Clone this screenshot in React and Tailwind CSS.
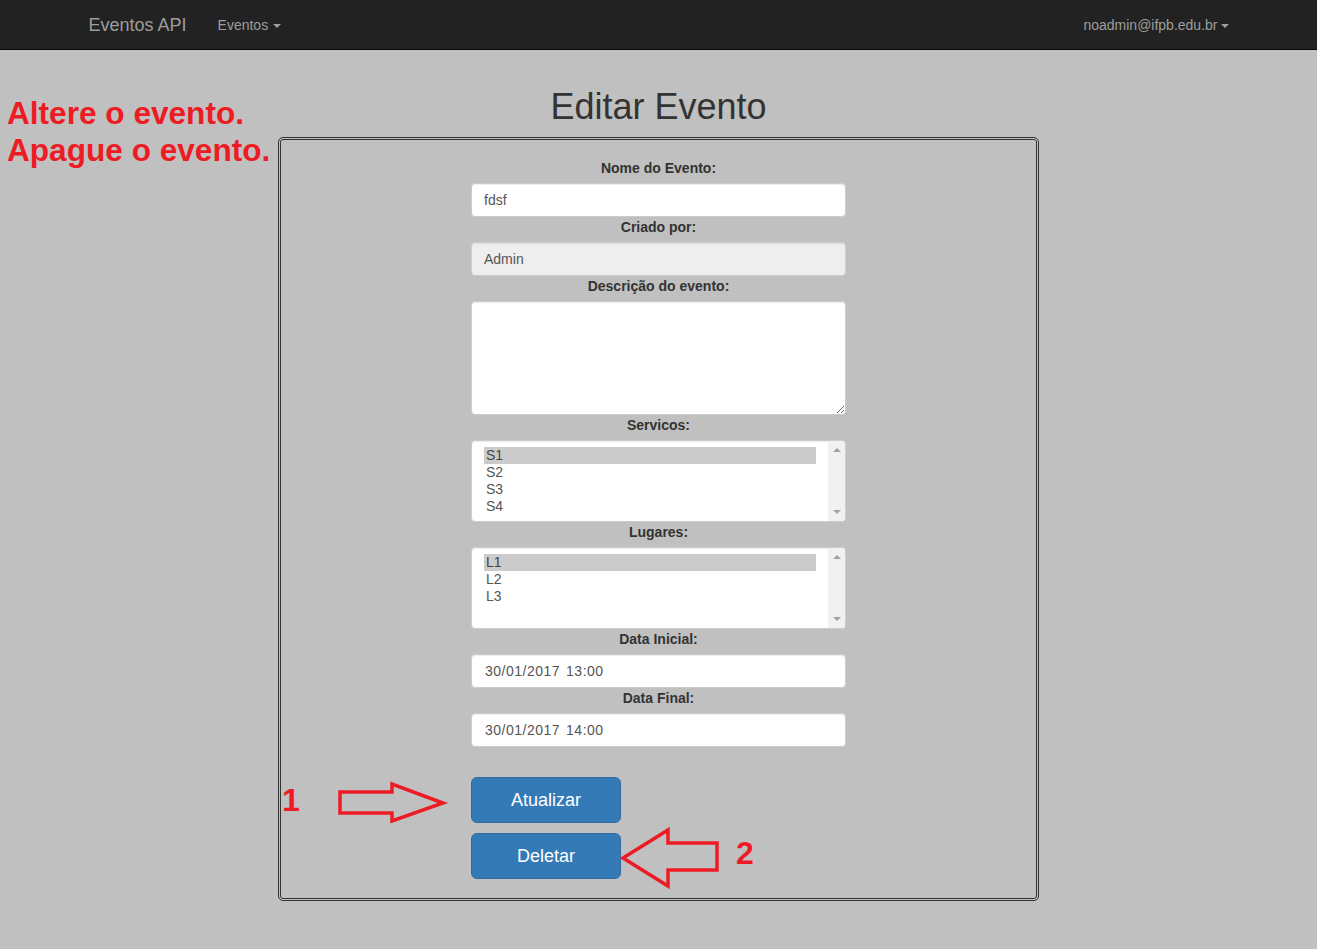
import React from "react";

const font = { fontFamily: '"Liberation Sans", Arial, sans-serif' };

function Caret() {
  return (
    <span className="inline-block ml-[3px] w-0 h-0 border-t-[4px] border-t-[#9d9d9d] border-x-[4px] border-x-transparent align-middle" />
  );
}

function Label({ children }) {
  return (
    <label className="block h-[20px] leading-[20px] mb-[5px] text-[14px] font-bold text-[#333] text-center">
      {children}
    </label>
  );
}

function TextInput({ value, disabled }) {
  return (
    <input
      type="text"
      defaultValue={value}
      disabled={disabled}
      className={`block w-[375px] h-[34px] mx-auto px-[12px] text-[14px] text-[#555] border border-[#ccc] rounded-[4px] shadow-[inset_0_1px_1px_rgba(0,0,0,0.075)] outline-none ${
        disabled ? "bg-[#eeeeee]" : "bg-white"
      }`}
      style={font}
    />
  );
}

function DateInput({ date, time }) {
  return (
    <div className="flex items-center w-[375px] h-[34px] mx-auto pl-[13px] text-[14px] text-[#555] tracking-[0.5px] bg-white border border-[#ccc] rounded-[4px] shadow-[inset_0_1px_1px_rgba(0,0,0,0.075)]">
      <span>{date}</span>
      <span className="ml-[6px]">{time}</span>
    </div>
  );
}

function ListBox({ items }) {
  return (
    <div className="flex w-[375px] h-[82px] mx-auto bg-white border border-[#ccc] rounded-[4px] overflow-hidden shadow-[inset_0_1px_1px_rgba(0,0,0,0.075)]">
      <div className="flex-1 pt-[6px] px-[12px]">
        {items.map((it, i) => (
          <div
            key={it}
            className={`h-[17px] leading-[17px] pl-[2px] text-[14px] ${
              i === 0 ? "bg-[#cbcbcb] text-[#444]" : "text-[#555]"
            }`}
          >
            {it}
          </div>
        ))}
      </div>
      <div className="w-[17px] bg-[#f1f1f1] flex flex-col items-center justify-between py-[7px]">
        <span className="w-0 h-0 border-b-[4px] border-b-[#a3a3a3] border-x-[4px] border-x-transparent" />
        <span className="w-0 h-0 border-t-[4px] border-t-[#a3a3a3] border-x-[4px] border-x-transparent" />
      </div>
    </div>
  );
}

export default function App() {
  return (
    <div className="relative min-h-[949px] bg-[#c0c0c0]" style={font}>
      {/* Navbar */}
      <nav className="h-[50px] bg-[#222222] border-b border-[#080808]">
        <div className="w-[1170px] mx-auto px-[15px] h-full flex items-center text-[#9d9d9d]">
          <span className="text-[18px] leading-[20px]">Eventos API</span>
          <span className="ml-[31px] text-[14px] leading-[20px]">
            Eventos
            <span className="ml-[2px]">
              <Caret />
            </span>
          </span>
          <span className="ml-auto text-[14px] leading-[20px]">
            noadmin@ifpb.edu.br
            <Caret />
          </span>
        </div>
      </nav>

      {/* Title */}
      <h1 className="mt-[37px] h-[40px] leading-[40px] text-[36px] text-[#333] text-center">
        Editar Evento
      </h1>

      {/* Form box */}
      <div className="mt-[10px] w-[761px] mx-auto border-[3px] border-double border-[#333] rounded-[5px] pt-[18px] pb-[19px]">
        <Label>Nome do Evento:</Label>
        <TextInput value="fdsf" />
        <Label>Criado por:</Label>
        <TextInput value="Admin" disabled />
        <Label>Descrição do evento:</Label>
        <textarea
          className="block w-[375px] h-[114px] mx-auto px-[12px] py-[6px] text-[14px] text-[#555] bg-white border border-[#ccc] rounded-[4px] shadow-[inset_0_1px_1px_rgba(0,0,0,0.075)] outline-none"
          style={font}
        />
        <Label>Servicos:</Label>
        <ListBox items={["S1", "S2", "S3", "S4"]} />
        <Label>Lugares:</Label>
        <ListBox items={["L1", "L2", "L3"]} />
        <Label>Data Inicial:</Label>
        <DateInput date="30/01/2017" time="13:00" />
        <Label>Data Final:</Label>
        <DateInput date="30/01/2017" time="14:00" />

        <div className="w-[375px] mx-auto mt-[30px] flex flex-col gap-[10px]">
          <button className="w-[150px] h-[46px] bg-[#337ab7] border border-[#2e6da4] rounded-[6px] text-white text-[18px]">
            Atualizar
          </button>
          <button className="w-[150px] h-[46px] bg-[#337ab7] border border-[#2e6da4] rounded-[6px] text-white text-[18px]">
            Deletar
          </button>
        </div>
      </div>

      {/* Annotations */}
      <div className="absolute left-[7px] top-[95px] text-[31.6px] leading-[37px] font-bold text-[#ed1c24]">
        <div>Altere o evento.</div>
        <div>Apague o evento.</div>
      </div>
      <div className="absolute left-[282px] top-[782px] text-[32px] leading-[37px] font-bold text-[#ed1c24]">
        1
      </div>
      <div className="absolute left-[736px] top-[835px] text-[32px] leading-[37px] font-bold text-[#ed1c24]">
        2
      </div>
      <svg
        className="absolute left-0 top-0 pointer-events-none"
        width="1317"
        height="949"
      >
        <polygon
          points="340,792 392,792 392,784 443,803 392,821 392,813 340,813"
          fill="none"
          stroke="#ed1c24"
          strokeWidth="3.5"
          strokeLinejoin="miter"
        />
        <polygon
          points="717,843 668,843 668,830 623,858 668,886 668,870 717,870"
          fill="none"
          stroke="#ed1c24"
          strokeWidth="3.5"
          strokeLinejoin="miter"
        />
      </svg>
    </div>
  );
}
